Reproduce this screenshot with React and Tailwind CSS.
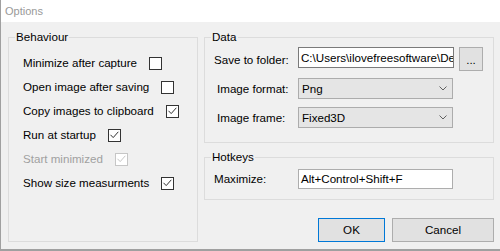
import React from "react"

const font = "font-['Liberation_Sans',Arial,sans-serif]"

const Box = ({ checked, disabled }) => (
  <span
    className={`ml-[12px] w-[13px] h-[13px] shrink-0 border bg-white flex items-center justify-center ${
      disabled ? "border-[#c6c6c6]" : "border-[#333333]"
    }`}
  >
    {checked && (
      <svg width="11" height="11" viewBox="0 0 11 11">
        <path
          d="M1.5 4.8 L4.2 7.6 L9.3 1.8"
          fill="none"
          stroke={disabled ? "#c6c6c6" : "#333333"}
          strokeWidth="1"
        />
      </svg>
    )}
  </span>
)

const CheckRow = ({ label, checked, disabled }) => (
  <div className="h-[24px] flex items-center whitespace-nowrap">
    <span className={disabled ? "text-[#a0a0a0]" : "text-black"}>{label}</span>
    <Box checked={checked} disabled={disabled} />
  </div>
)

const Chevron = () => (
  <svg width="8" height="5" viewBox="0 0 8 5">
    <path d="M0.5 0.5 L4 4 L7.5 0.5" fill="none" stroke="#606060" strokeWidth="1" />
  </svg>
)

const Combo = ({ value }) => (
  <div className="w-[155px] h-[21px] shrink-0 border border-[#acacac] bg-[#e5e5e5] flex items-center justify-between pl-[3px] pr-[5px]">
    <span>{value}</span>
    <Chevron />
  </div>
)

const Label = ({ children, className }) => (
  <span className={`w-[93px] shrink-0 whitespace-nowrap ${className}`}>{children}</span>
)

const Group = ({ title, className, children }) => (
  <fieldset className={`border border-[#dcdcdc] ${className}`}>
    <legend className="ml-[6px] px-[1px] leading-[14px]">{title}</legend>
    {children}
  </fieldset>
)

export default function App() {
  return (
    <div
      className={`w-[500px] h-[251px] flex flex-col border-l border-b-2 border-[#a0a0a0] bg-[#f0f0f0] text-[11.6px] text-black ${font} overflow-hidden`}
    >
      <div className="h-[22px] bg-white flex items-center pl-[4px] text-[11px] text-[#999999]">
        Options
      </div>

      <div className="flex-1 flex pt-[8px] pl-[7px] gap-[6px]">
        <Group title="Behaviour" className="w-[190px] h-[212px]">
          <div className="pl-[14px] pt-[7px] flex flex-col">
            <CheckRow label="Minimize after capture" />
            <CheckRow label="Open image after saving" />
            <CheckRow label="Copy images to clipboard" checked />
            <CheckRow label="Run at startup" checked />
            <CheckRow label="Start minimized" checked disabled />
            <CheckRow label="Show size measurments" checked />
          </div>
        </Group>

        <div className="w-[290px] flex flex-col">
          <Group title="Data" className="h-[113px]">
            <div className="flex flex-col pt-[3px]">
              <div className="h-[24px] flex items-center">
                <Label className="pl-[9px] pt-[2px]">Save to folder:</Label>
                <div className="w-[156px] h-[21px] shrink-0 border border-[#7a7a7a] bg-white flex items-center pl-[2px] overflow-hidden whitespace-nowrap self-start">
                  C:\Users\ilovefreesoftware\De
                </div>
                <button className="ml-[5px] w-[24px] h-[24px] shrink-0 border border-[#adadad] bg-[#e1e1e1] flex items-end justify-center pb-[4px] leading-none">
                  ...
                </button>
              </div>
              <div className="h-[21px] mt-[7px] flex items-center">
                <Label className="pl-[12px]">Image format:</Label>
                <Combo value="Png" />
              </div>
              <div className="h-[21px] mt-[8px] flex items-center">
                <Label className="pl-[12px]">Image frame:</Label>
                <Combo value="Fixed3D" />
              </div>
            </div>
          </Group>

          <Group title="Hotkeys" className="h-[50px] mt-[7px]">
            <div className="flex items-center pt-[5px]">
              <Label className="pl-[9px]">Maximize:</Label>
              <div className="w-[155px] h-[20px] shrink-0 border border-[#adadad] bg-white flex items-center pl-[2px] whitespace-nowrap">
                Alt+Control+Shift+F
              </div>
            </div>
          </Group>

          <div className="mt-[18px] flex justify-end gap-[7px]">
            <button className="w-[67px] h-[24px] border border-[#0078d7] bg-[#e1e1e1] flex items-center justify-center">
              OK
            </button>
            <button className="w-[102px] h-[24px] border border-[#adadad] bg-[#e1e1e1] flex items-center justify-center">
              Cancel
            </button>
          </div>
        </div>
      </div>
    </div>
  )
}
